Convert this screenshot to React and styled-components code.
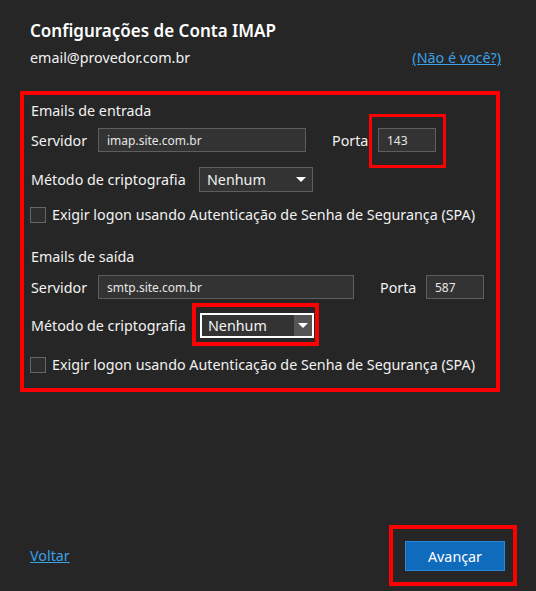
import styled, { createGlobalStyle } from 'styled-components';

const GlobalStyle = createGlobalStyle`
html, body {
  margin: 0;
  padding: 0;
  background: #262626;
}
body {
  font-family: "Noto Sans", "Open Sans", sans-serif;
  color: #f2f2f2;
}
`;

const Page = styled.div`
height: 591px;
box-sizing: border-box;
display: flex;
flex-direction: column;
padding: 19px 35px 5px 30px;
`;

const Title = styled.h1`
margin: 0;
font-size: 17px;
line-height: 24px;
font-weight: 600;
color: #ffffff;
`;

const AccountRow = styled.div`
display: flex;
justify-content: space-between;
align-items: center;
margin-top: 5px;
font-size: 14.3px;
line-height: 20px;
`;

const Link = styled.a`
color: #3aa0e8;
text-decoration: underline;
font-size: 14.3px;
cursor: pointer;
`;

const Highlight = styled.div`
border: ${props => props.thick || 4}px solid #ff0000;
`;

const Section = styled(Highlight)`
margin: 23px 0 0 -10px;
width: 480px;
box-sizing: border-box;
padding: 6px 10px 15px 7px;
`;

const GroupTitle = styled.div`
font-size: 14.3px;
line-height: 20px;
margin-top: ${props => props.top || 0}px;
`;

const Row = styled.div`
display: flex;
align-items: center;
margin-top: ${props => props.top}px;
font-size: 14.3px;
`;

const Label = styled.span`
width: ${props => props.w}px;
flex: none;
`;

const Input = styled.div`
box-sizing: border-box;
width: ${props => props.w}px;
height: ${props => props.h || 24}px;
background: #333333;
border: 1px solid #5e5e5e;
font-size: 12px;
color: #e6e6e6;
display: flex;
align-items: center;
padding-left: 8px;
`;

const Spacer = styled.div`
width: ${props => props.w}px;
flex: none;
`;

const PortHighlight = styled(Highlight)`
margin: -14px -10px -16px -9px;
padding: 11px 7px 13px 6px;
`;

const SelectHighlight = styled(Highlight)`
margin: -10px -5px -8px -8px;
padding: 6px 1px 4px 4px;
`;

const Select = styled.div`
box-sizing: border-box;
width: 114px;
height: 25px;
display: flex;
align-items: stretch;
background: #333333;
border: ${props => props.focused ? '2px solid #ffffff' : '1px solid #5e5e5e'};
font-size: 14.3px;
color: #f2f2f2;
`;

const SelectValue = styled.span`
flex: 1;
display: flex;
align-items: center;
padding-left: ${props => props.focused ? 6 : 7}px;
`;

const Caret = styled.span`
width: ${props => props.focused ? 18 : 22}px;
display: flex;
align-items: center;
justify-content: center;
background: ${props => props.focused ? '#555555' : 'transparent'};
&::after {
  content: "";
  border-left: 5px solid transparent;
  border-right: 5px solid transparent;
  border-top: 5px solid #ffffff;
}
`;

const CheckRow = styled.label`
display: flex;
align-items: center;
gap: 6px;
margin-top: ${props => props.top}px;
margin-left: -1px;
font-size: 14.3px;
line-height: 16px;
`;

const Box = styled.span`
width: 16px;
height: 16px;
box-sizing: border-box;
border: 1px solid #666666;
background: #2e2e2e;
flex: none;
`;

const Grow = styled.div`
flex: 1;
`;

const Footer = styled.div`
display: flex;
justify-content: space-between;
align-items: center;
margin-right: -16px;
`;

const ButtonBox = styled(Highlight)`
padding: 12px 8px 11px 12px;
`;

const Button = styled.button`
width: 100px;
height: 30px;
background: #0f6cbd;
border: 1px solid #2b88d8;
color: #ffffff;
font-family: inherit;
font-size: 14.3px;
cursor: pointer;
display: block;
`;

const Dropdown = ({ focused }) => (
  <Select focused={focused}>
    <SelectValue focused={focused}>Nenhum</SelectValue>
    <Caret focused={focused} />
  </Select>
);

const App = () => {
  return (
    <Page>
      <GlobalStyle />
      <Title>Configurações de Conta IMAP</Title>
      <AccountRow>
        <span>email@provedor.com.br</span>
        <Link>(Não é você?)</Link>
      </AccountRow>

      <Section>
        <GroupTitle>Emails de entrada</GroupTitle>
        <Row top={7}>
          <Label w={67}>Servidor</Label>
          <Input w={208}>imap.site.com.br</Input>
          <Spacer w={26} />
          <Label w={46}>Porta</Label>
          <PortHighlight thick={3}>
            <Input w={58} h={24}>143</Input>
          </PortHighlight>
        </Row>
        <Row top={15}>
          <Label w={168}>Método de criptografia</Label>
          <Dropdown />
        </Row>
        <CheckRow top={15}>
          <Box />
          Exigir logon usando Autenticação de Senha de Segurança (SPA)
        </CheckRow>

        <GroupTitle top={24}>Emails de saída</GroupTitle>
        <Row top={8}>
          <Label w={67}>Servidor</Label>
          <Input w={256}>smtp.site.com.br</Input>
          <Spacer w={26} />
          <Label w={46}>Porta</Label>
          <Input w={58}>587</Input>
        </Row>
        <Row top={14}>
          <Label w={169}>Método de criptografia</Label>
          <SelectHighlight>
            <Dropdown focused />
          </SelectHighlight>
        </Row>
        <CheckRow top={19}>
          <Box />
          Exigir logon usando Autenticação de Senha de Segurança (SPA)
        </CheckRow>
      </Section>

      <Grow />

      <Footer>
        <Link>Voltar</Link>
        <ButtonBox>
          <Button>Avançar</Button>
        </ButtonBox>
      </Footer>
    </Page>
  );
};

export default App;
